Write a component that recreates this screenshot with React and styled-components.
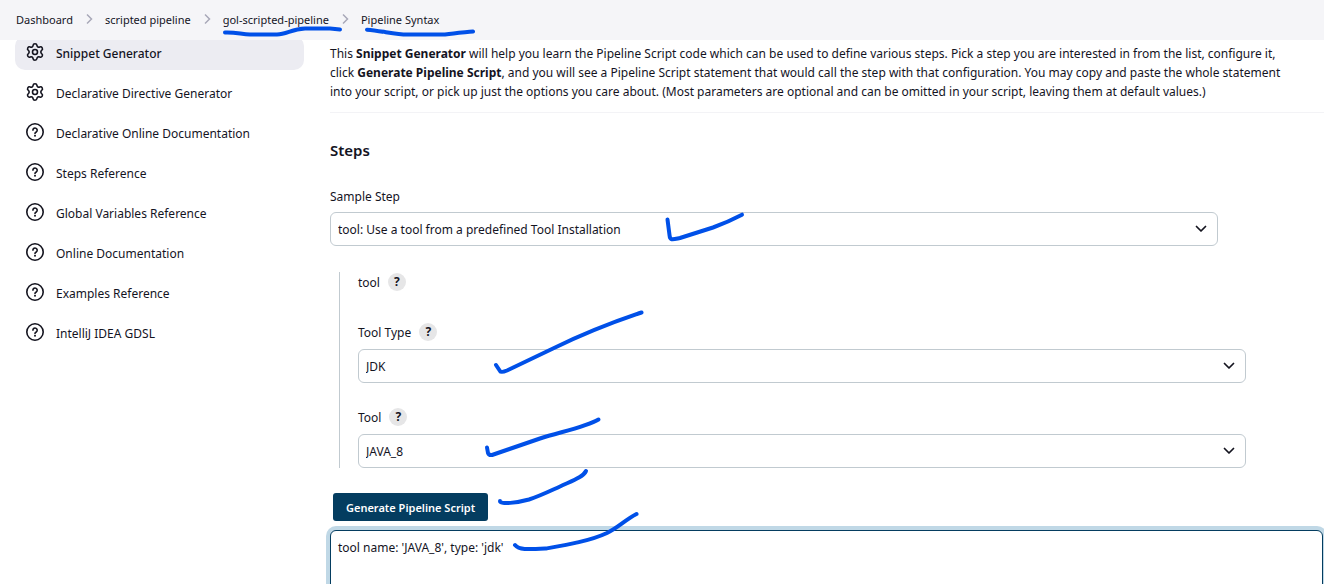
import React from "react";
import styled, { createGlobalStyle, css } from "styled-components";
import { Settings } from "lucide-react";

const GlobalStyle = createGlobalStyle`
  *, *::before, *::after { box-sizing: border-box; }
  body {
    margin: 0;
    background: #fff;
    color: #14141f;
    font-family: "Noto Sans", "Open Sans", sans-serif;
    font-size: 12px;
    line-height: 19px;
  }
  button, select, textarea { font: inherit; color: inherit; }
`;

const Page = styled.div`
  position: relative;
  height: 100vh;
  overflow: hidden auto;
  scrollbar-width: none;
`;

const BreadcrumbBar = styled.nav`
  position: sticky;
  top: 0;
  z-index: 1;
  height: 40px;
  padding: 0 16px 2px;
  background: #f5f5f8;
`;

const Crumbs = styled.ol`
  display: flex;
  align-items: center;
  height: 100%;
  margin: 0;
  padding: 0;
  list-style: none;
  font-size: 11px;
`;

const Crumb = styled.li`
  display: flex;
  align-items: center;
`;

const CrumbLink = styled.a`
  color: inherit;
  text-decoration: none;
`;

const CrumbArrow = styled.svg`
  width: 8px;
  height: 12px;
  margin: 0 12px;
  fill: none;
  stroke: #a9a9b8;
  stroke-width: 1.5;
`;

const Columns = styled.div`
  display: grid;
  grid-template-columns: 290px minmax(0, 1fr);
  column-gap: 25px;
  margin-top: -4px;
  padding-left: 15px;
`;

const SideNav = styled.nav`
  display: flex;
  flex-direction: column;
  gap: 6px;
`;

const SideLink = styled.a`
  display: flex;
  align-items: center;
  gap: 11px;
  height: 34px;
  margin-right: 1px;
  padding: 0 10px;
  border-radius: 10px;
  color: inherit;
  text-decoration: none;
  ${(p) => p.$active && css`
    background: #ececf2;
    font-weight: 500;
  `}

  svg {
    flex: none;
    width: 20px;
    height: 20px;
    margin-bottom: 2px;
  }
`;

const Content = styled.main`
  padding-top: 8px;
`;

const Intro = styled.p`
  margin: 0;
  padding: 0 32px 11px 0;
  border-bottom: 1px solid #f3f3f6;
`;

const SectionTitle = styled.h2`
  margin: 27px 0 0;
  font-size: 15px;
  line-height: 20px;
  font-weight: 600;
`;

const Field = styled.div`
  max-width: 888px;
  margin-top: ${(p) => p.$gap}px;
`;

const LabelRow = styled.div`
  display: flex;
  align-items: center;
  gap: 8px;
  height: 20px;
`;

const HelpButton = styled.button`
  width: 18px;
  height: 18px;
  padding: 0;
  border: 0;
  border-radius: 50%;
  background: #e6e6e7;
  line-height: 18px;
  font-weight: 700;
`;

const SelectBox = styled.div`
  display: grid;
  align-items: center;
  margin-top: ${(p) => p.$gap ?? 7}px;

  > * { grid-area: 1 / 1; }

  > svg {
    justify-self: end;
    width: 12px;
    height: 8px;
    margin-right: 11px;
    fill: none;
    stroke: #14141f;
    stroke-width: 1.75;
    stroke-linecap: round;
    stroke-linejoin: round;
    pointer-events: none;
  }
`;

const Select = styled.select`
  appearance: none;
  width: 100%;
  height: 34px;
  padding: 0 32px 0 7px;
  border: 1px solid #c1cad0;
  border-radius: 6px;
  background: #fff;
`;

const StepBody = styled.div`
  margin: 26px 0 0 9px;
  padding-left: 18px;
  border-left: 1px solid #c1cad0;
`;

const GenerateButton = styled.button`
  display: block;
  height: 28px;
  margin: 25px 0 9px 3px;
  padding: 0 13px;
  border: 0;
  border-radius: 3px;
  background: #043d60;
  color: #fff;
  font-size: 11px;
  font-weight: 600;
`;

const Output = styled.textarea`
  display: block;
  width: calc(100% - 1px);
  height: 96px;
  padding: 7px;
  border: 1px solid #043d60;
  border-radius: 6px;
  outline: 0;
  box-shadow: 0 0 0 4px #c0d8e6;
  resize: none;
`;

const PenMarks = styled.svg`
  position: absolute;
  top: 0;
  left: 0;
  z-index: 2;
  width: 1324px;
  height: 584px;
  pointer-events: none;
  fill: none;
  stroke: #0050e8;
  stroke-width: 4;
  stroke-linecap: round;
  stroke-linejoin: round;
`;

function GearIcon() {
  return <Settings strokeWidth={1.9} aria-hidden="true" />;
}

function QuestionIcon() {
  return (
    <svg viewBox="0 0 20 20" fill="none" stroke="currentColor" strokeWidth="1.6" strokeLinecap="round" aria-hidden="true">
      <circle cx="10" cy="10" r="8.2" />
      <path d="M7.900 8.100a2.150 2.150 0 1 1 3.300 1.900c-.75.45-1.200.8-1.200 1.500" />
      <circle cx="10" cy="13.7" r="1" fill="currentColor" stroke="none" />
    </svg>
  );
}

const crumbs = ["Dashboard", "scripted pipeline", "gol-scripted-pipeline", "Pipeline Syntax"];

const links = [
  { text: "Snippet Generator", icon: GearIcon, active: true },
  { text: "Declarative Directive Generator", icon: GearIcon },
  { text: "Declarative Online Documentation", icon: QuestionIcon },
  { text: "Steps Reference", icon: QuestionIcon },
  { text: "Global Variables Reference", icon: QuestionIcon },
  { text: "Online Documentation", icon: QuestionIcon },
  { text: "Examples Reference", icon: QuestionIcon },
  { text: "IntelliJ IDEA GDSL", icon: QuestionIcon },
];

function DropDown({ id, value, gap }) {
  return (
    <SelectBox $gap={gap}>
      <Select id={id} defaultValue={value}>
        <option>{value}</option>
      </Select>
      <svg viewBox="0 0 12 8" aria-hidden="true">
        <path d="M1.5 1.5 6 6l4.500-4.500" />
      </svg>
    </SelectBox>
  );
}

function Help({ topic }) {
  return <HelpButton type="button" aria-label={`Help for ${topic}`}>?</HelpButton>;
}

export default function App() {
  return (
    <Page>
      <GlobalStyle />
      <BreadcrumbBar aria-label="Breadcrumb">
        <Crumbs>
          {crumbs.map((text, i) => (
            <Crumb key={text}>
              {i > 0 && (
                <CrumbArrow viewBox="0 0 8 12" aria-hidden="true">
                  <path d="M2 1.500 6.500 6 2 10.500" />
                </CrumbArrow>
              )}
              <CrumbLink href="#">{text}</CrumbLink>
            </Crumb>
          ))}
        </Crumbs>
      </BreadcrumbBar>

      <Columns>
        <SideNav aria-label="Pipeline syntax">
          {links.map(({ text, icon: Icon, active }) => (
            <SideLink key={text} href="#" $active={active}>
              <Icon />
              {text}
            </SideLink>
          ))}
        </SideNav>

        <Content>
          <Intro>
            This <b>Snippet Generator</b> will help you learn the Pipeline Script code which can be
            used to define various steps. Pick a step you are interested in from the list, configure
            it, click <b>Generate Pipeline Script</b>, and you will see a Pipeline Script statement
            that would call the step with that configuration. You may copy and paste the whole
            statement into your script, or pick up just the options you care about. (Most parameters
            are optional and can be omitted in your script, leaving them at default values.)
          </Intro>

          <SectionTitle>Steps</SectionTitle>
          <Field $gap={26}>
            <LabelRow>
              <label htmlFor="step">Sample Step</label>
            </LabelRow>
            <DropDown id="step" value="tool: Use a tool from a predefined Tool Installation" gap={6} />
          </Field>

          <StepBody>
            <LabelRow>
              tool <Help topic="tool" />
            </LabelRow>
            <Field $gap={30}>
              <LabelRow>
                <label htmlFor="type">Tool Type</label> <Help topic="Tool Type" />
              </LabelRow>
              <DropDown id="type" value="JDK" />
            </Field>
            <Field $gap={24}>
              <LabelRow>
                <label htmlFor="tool">Tool</label> <Help topic="Tool" />
              </LabelRow>
              <DropDown id="tool" value="JAVA_8" />
            </Field>
          </StepBody>

          <GenerateButton type="button">Generate Pipeline Script</GenerateButton>
          <Output aria-label="Generated script" defaultValue="tool name: 'JAVA_8', type: 'jdk'" />
        </Content>
      </Columns>

      <PenMarks viewBox="0 0 1324 584" aria-hidden="true">
        <path d="M225 32.500C236 32 242 34.500 250 34.500H277C287 34 292 29 305 28.500H330L340 29.500" />
        <path d="M367 29.700C382 31 396 34.500 407 34.500H445C455 33 463 32.500 473 31.500" />
        <path d="M667.500 219.500 669.500 235C670 241 673 239.500 680 238L713 227.500Q728 222 742 214.700" />
        <path d="M496 365 500 371Q501 373 507 370.500L553 348.500Q595 328 641.500 312.500" />
        <path d="M487 447.500 488 453Q489 455.500 492 455L540 438.500C560 432 586 427 598.500 419.500" />
        <path d="M500 501C500 505 518 502.500 529 499.500 540 496 550 491 560 486.500 574 480 583 477 586 471" />
        <path d="M515 545C519 550 527 549.500 546 548.500 566 545 590 541 607 533 619 527 625 520 636.500 514" />
      </PenMarks>
    </Page>
  );
}
